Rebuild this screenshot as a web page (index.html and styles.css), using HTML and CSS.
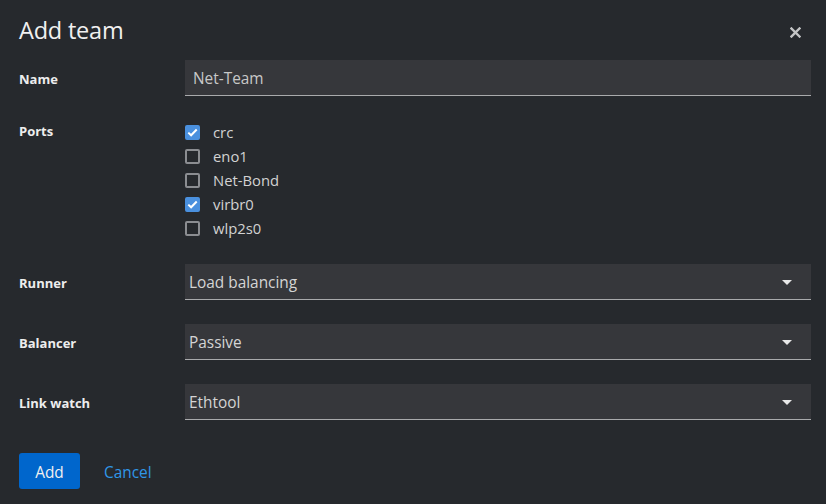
FILE: index.html
```html
<!DOCTYPE html>
<html>
<head>
<meta charset="utf-8">
<link rel="stylesheet" href="styles.css">
</head>
<body>
<div class="dialog">
  <header class="head">
    <h1 class="title">Add team</h1>
    <button class="close" aria-label="Close">
      <svg width="11" height="11" viewBox="0 0 11 11"><path d="M1.5 1.5 L9.5 9.5 M9.5 1.5 L1.5 9.5" stroke="#c4c5c6" stroke-width="2.4" stroke-linecap="square"/></svg>
    </button>
  </header>
  <form class="form">
    <div class="label">Name</div>
    <div class="field"><input class="text" type="text" value="Net-Team"></div>

    <div class="label label-top">Ports</div>
    <div class="ports">
      <label class="port"><span class="box checked"><svg width="11" height="9" viewBox="0 0 11 9"><path d="M1.3 4.6 L4.1 7.3 L9.7 1.5" fill="none" stroke="#fff" stroke-width="2"/></svg></span>crc</label>
      <label class="port"><span class="box"></span>eno1</label>
      <label class="port"><span class="box"></span>Net-Bond</label>
      <label class="port"><span class="box checked"><svg width="11" height="9" viewBox="0 0 11 9"><path d="M1.3 4.6 L4.1 7.3 L9.7 1.5" fill="none" stroke="#fff" stroke-width="2"/></svg></span>virbr0</label>
      <label class="port"><span class="box"></span>wlp2s0</label>
    </div>

    <div class="label">Runner</div>
    <div class="select"><span>Load balancing</span><span class="caret"></span></div>

    <div class="label">Balancer</div>
    <div class="select"><span>Passive</span><span class="caret"></span></div>

    <div class="label">Link watch</div>
    <div class="select"><span>Ethtool</span><span class="caret"></span></div>
  </form>
  <footer class="actions">
    <button class="btn-primary">Add</button>
    <button class="btn-link">Cancel</button>
  </footer>
</div>
</body>
</html>
```

FILE: styles.css
```css
* { box-sizing: border-box; }
html, body { margin: 0; padding: 0; }
body {
  background: #26292d;
  color: #e0e0e0;
  font-family: "Open Sans", "Noto Sans", sans-serif;
  width: 826px;
  height: 504px;
  overflow: hidden;
}
.dialog {
  padding: 13px 15px 0 19px;
}
.head {
  display: flex;
  justify-content: space-between;
  align-items: flex-start;
  height: 47px;
}
.title {
  margin: 0;
  font-family: "Open Sans", sans-serif;
  font-weight: 400;
  font-size: 23.5px;
  line-height: 34px;
  color: #f0f0f0;
  letter-spacing: -0.2px;
}
.close {
  background: none;
  border: 0;
  padding: 0;
  margin: 14px 10px 0 0;
  width: 11px;
  height: 11px;
  display: flex;
}
.form {
  display: grid;
  grid-template-columns: 166px 1fr;
  row-gap: 24px;
  align-items: center;
}
.label {
  font-size: 13px;
  font-weight: 700;
  color: #ededed;
  padding-top: 2px;
}
.label-top {
  align-self: start;
  line-height: 24px;
  padding-top: 0;
  margin-top: -1px;
}
.text {
  display: block;
  width: 100%;
  height: 36px;
  background: #36373b;
  border: 0;
  border-bottom: 1px solid #a9aaac;
  color: #c8c8c8;
  font-family: "Open Sans", sans-serif;
  font-size: 15.4px;
  padding: 2px 8px 0;
  outline: none;
}
.ports {
  display: flex;
  flex-direction: column;
}
.port {
  display: flex;
  align-items: center;
  height: 24px;
  font-size: 14.8px;
  color: #d2d2d2;
}
.box {
  width: 15px;
  height: 15px;
  margin: 0 13px 0 0;
  border: 2px solid #8b8d91;
  border-radius: 2px;
  display: flex;
  align-items: center;
  justify-content: center;
}
.box.checked {
  background: #4a90de;
  border-color: #4a90de;
}
.select {
  height: 36px;
  background: #36373b;
  border-bottom: 1px solid #a9aaac;
  display: flex;
  align-items: center;
  justify-content: space-between;
  padding: 2px 19px 0 4px;
  font-size: 15.4px;
  color: #d4d4d4;
}
.caret {
  width: 0;
  height: 0;
  border-left: 5px solid transparent;
  border-right: 5px solid transparent;
  border-top: 5px solid #e8e8e8;
}
.actions {
  display: flex;
  align-items: center;
  gap: 24px;
  margin-top: 33px;
}
.btn-primary {
  background: #0066cc;
  color: #f0f0f0;
  border: 0;
  border-radius: 3px;
  height: 36px;
  width: 61px;
  font-family: "Open Sans", sans-serif;
  font-size: 15.4px;
  padding: 2px 0 0;
}
.btn-link {
  background: none;
  border: 0;
  padding: 2px 0 0;
  color: #3097e8;
  font-family: "Open Sans", sans-serif;
  font-size: 15.4px;
}
```
